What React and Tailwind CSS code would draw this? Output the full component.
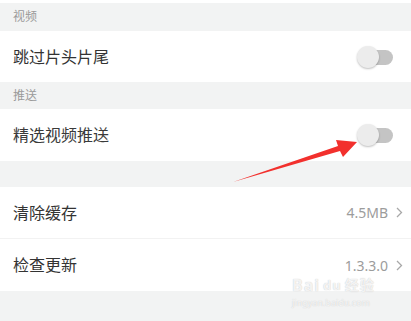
import React from "react";

const font = { fontFamily: '"Noto Sans", "Noto Sans CJK SC", sans-serif' };

function Toggle() {
  return (
    <div className="relative h-[22px] w-[36px]">
      <div className="absolute right-0 top-[4px] h-[15px] w-[28px] rounded-full bg-[#c4c4c4]" />
      <div className="absolute left-0 top-0 h-[22px] w-[22px] rounded-full bg-[#ececec] shadow-[0_1px_2px_rgba(0,0,0,0.25)]" />
    </div>
  );
}

function SectionHeader({ children, className = "" }) {
  return (
    <div className={`flex items-center bg-[#f2f3f3] px-[13px] text-[12px] text-[#9a9a9a] ${className}`}>
      {children}
    </div>
  );
}

function Chevron() {
  return (
    <svg width="7" height="11" viewBox="0 0 7 11" className="ml-[8px]">
      <path d="M1 1l4.5 4.5L1 10" fill="none" stroke="#a8a8a8" strokeWidth="1.3" />
    </svg>
  );
}

export default function App() {
  return (
    <div className="relative h-[321px] w-[411px] overflow-hidden bg-[#f2f3f3]" style={font}>
      <div className="h-[3px] bg-white" />
      <SectionHeader className="h-[28px]">视频</SectionHeader>
      <div className="flex h-[51px] items-center justify-between bg-white pl-[13px] pr-[18px]">
        <span className="text-[16px] text-[#333]">跳过片头片尾</span>
        <Toggle />
      </div>
      <SectionHeader className="h-[27px]">推送</SectionHeader>
      <div className="flex h-[52px] items-center justify-between bg-white pl-[13px] pr-[18px]">
        <span className="text-[16px] text-[#3a3a3a]">精选视频推送</span>
        <Toggle />
      </div>
      <div className="h-[26px]" />
      <div className="bg-white">
        <div className="flex h-[52px] items-center justify-between border-b border-[#f2f2f2] pl-[13px] pr-[8px]">
          <span className="text-[16px] text-[#333]">清除缓存</span>
          <span className="flex items-center text-[14px] text-[#9c9c9c]">
            4.5MB
            <Chevron />
          </span>
        </div>
        <div className="flex h-[52px] items-center justify-between pl-[13px] pr-[8px]">
          <span className="text-[16px] text-[#333]">检查更新</span>
          <span className="flex items-center text-[14px] text-[#9c9c9c]">
            1.3.3.0
            <Chevron />
          </span>
        </div>
      </div>

      <svg className="absolute left-0 top-0" width="411" height="321" viewBox="0 0 411 321">
        <polygon
          points="233,182 338,146 336,140 357,142 343,157 340,151"
          fill="#f2302d"
        />
      </svg>

      <div className="absolute left-[292px] top-[277px] text-white/80">
        <div className="flex h-[16px] items-center gap-[3px] text-[16px] font-bold leading-[16px] tracking-[1px] [text-shadow:0_0_1px_#bbb]">
          Bai<span className="text-[13px]">du</span><span className="text-[14px]">经验</span>
        </div>
        <div className="mt-[5px] text-[9px] leading-[10px] [text-shadow:0_0_1px_#bbb]">jingyan.baidu.com</div>
      </div>
    </div>
  );
}
